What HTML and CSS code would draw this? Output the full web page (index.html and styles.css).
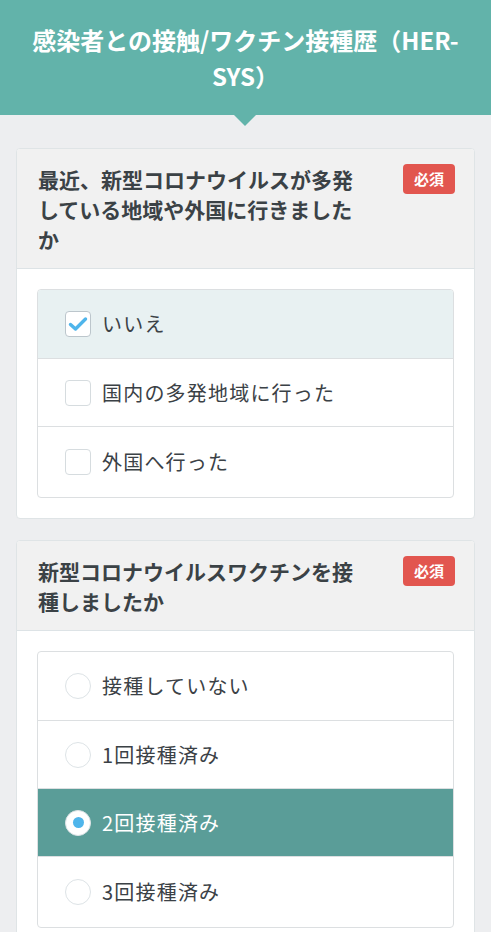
FILE: index.html
```html
<!DOCTYPE html>
<html lang="ja">
<head>
<meta charset="utf-8">
<link rel="stylesheet" href="styles.css">
</head>
<body>
<header class="page-header">
  <h1 class="page-title">感染者との接触/ワクチン接種歴（HER-SYS）</h1>
</header>
<main class="content">
  <section class="card">
    <div class="card-head">
      <h2 class="q-title">最近、新型コロナウイルスが多発している地域や外国に行きましたか</h2>
      <span class="badge">必須</span>
    </div>
    <div class="card-body">
      <div class="options">
        <div class="option option-checked">
          <span class="check is-on">
            <svg width="20" height="16" viewBox="0 0 20 16"><path d="M2.5 8.5 L7.5 13 L17.5 3" fill="none" stroke="#4fb5eb" stroke-width="3.4" stroke-linecap="round" stroke-linejoin="round"/></svg>
          </span>
          <span class="opt-text">いいえ</span>
        </div>
        <div class="option">
          <span class="check"></span>
          <span class="opt-text">国内の多発地域に行った</span>
        </div>
        <div class="option">
          <span class="check"></span>
          <span class="opt-text">外国へ行った</span>
        </div>
      </div>
    </div>
  </section>
  <section class="card">
    <div class="card-head">
      <h2 class="q-title">新型コロナウイルスワクチンを接種しましたか</h2>
      <span class="badge">必須</span>
    </div>
    <div class="card-body">
      <div class="options">
        <div class="option">
          <span class="radio"></span>
          <span class="opt-text">接種していない</span>
        </div>
        <div class="option">
          <span class="radio"></span>
          <span class="opt-text">1回接種済み</span>
        </div>
        <div class="option option-selected">
          <span class="radio is-on"></span>
          <span class="opt-text">2回接種済み</span>
        </div>
        <div class="option">
          <span class="radio"></span>
          <span class="opt-text">3回接種済み</span>
        </div>
      </div>
    </div>
  </section>
</main>
</body>
</html>
```
FILE: styles.css
```css
* { box-sizing: border-box; }
html, body { margin: 0; padding: 0; }
body {
  background: #edeef0;
  font-family: "Noto Sans CJK JP", "Noto Sans", sans-serif;
  color: #3b4146;
  width: 491px;
}
.page-header {
  position: relative;
  background: #62b3aa;
  height: 115px;
  padding: 22px 24px 0;
}
.page-header::after {
  content: "";
  position: absolute;
  left: 234px;
  bottom: -11px;
  border-left: 11px solid transparent;
  border-right: 11px solid transparent;
  border-top: 11px solid #62b3aa;
}
.page-title {
  margin: 0;
  color: #fff;
  font-size: 24px;
  line-height: 36px;
  font-weight: 700;
  text-align: center;
}
.content {
  padding: 33px 16px 0;
  display: flex;
  flex-direction: column;
  gap: 21px;
}
.card {
  background: #fff;
  border: 1px solid #dfe4e6;
  border-radius: 4px;
  overflow: hidden;
}
.card-head {
  background: #f1f1f1;
  border-bottom: 1px solid #dde3e6;
  display: flex;
  align-items: flex-start;
  padding: 15px 19px 14px 21px;
  gap: 32px;
}
.q-title {
  flex: 1;
  margin: 0;
  font-size: 21px;
  line-height: 30px;
  font-weight: 700;
  color: #3b4246;
}
.badge {
  flex: none;
  background: #e2564f;
  color: #fff;
  font-size: 15px;
  font-weight: 700;
  line-height: 30px;
  height: 30px;
  width: 52px;
  text-align: center;
  border-radius: 4px;
}
.card-body {
  padding: 20px;
}
.options {
  border: 1px solid #dcdfe1;
  border-radius: 4px;
  overflow: hidden;
}
.option {
  display: flex;
  align-items: center;
  height: 68px;
  padding-left: 27px;
  gap: 11px;
  border-top: 1px solid #dcdfe1;
}
.option:first-child { border-top: none; }
.option:last-child { height: 71px; }
.option-checked { background: #e8f1f2; }
.option-selected { background: #5a9d98; color: #fff; }
.opt-text {
  font-size: 20px;
  letter-spacing: 1.2px;
  line-height: 30px;
}
.check {
  width: 26px;
  height: 26px;
  border: 1px solid #d6dcdf;
  border-radius: 4px;
  background: #fff;
  display: flex;
  align-items: center;
  justify-content: center;
}
.check.is-on { border-color: #bcc6cc; }
.radio {
  width: 26px;
  height: 26px;
  border: 1px solid #dde3e6;
  border-radius: 50%;
  background: #fff;
  display: flex;
  align-items: center;
  justify-content: center;
}
.radio.is-on::before {
  content: "";
  width: 11px;
  height: 11px;
  border-radius: 50%;
  background: #4fb5eb;
}
```
